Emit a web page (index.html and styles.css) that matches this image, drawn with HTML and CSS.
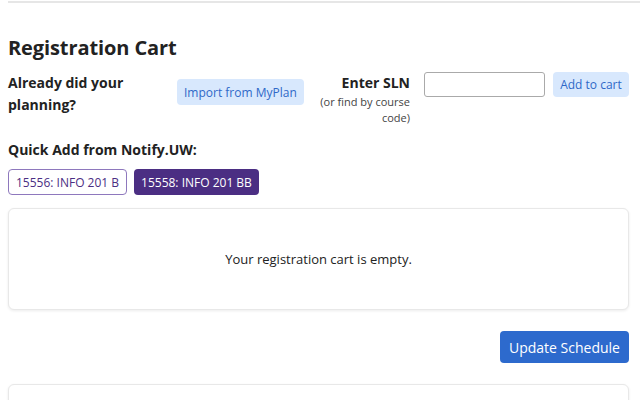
FILE: index.html
```html
<!DOCTYPE html>
<html>
<head>
<meta charset="utf-8">
<link rel="stylesheet" href="styles.css">
</head>
<body>
<div class="topline"></div>
<main class="page">
  <h1 class="title">Registration Cart</h1>
  <div class="addrow">
    <div class="label-plan">Already did your planning?</div>
    <button class="btn-light import">Import from MyPlan</button>
    <div class="sln-label">
      <div class="sln-title">Enter SLN</div>
      <div class="sln-sub">(or find by course code)</div>
    </div>
    <input class="sln-input" type="text">
    <button class="btn-light add">Add to cart</button>
  </div>
  <div class="quick-title">Quick Add from Notify.UW:</div>
  <div class="chips">
    <button class="chip chip-outline">15556: INFO 201 B</button>
    <button class="chip chip-filled">15558: INFO 201 BB</button>
  </div>
  <section class="card empty">Your registration cart is empty.</section>
  <div class="actions">
    <button class="btn-primary">Update Schedule</button>
  </div>
  <section class="card next"></section>
</main>
</body>
</html>
```
FILE: styles.css
```css
html, body { margin: 0; padding: 0; background: #fff; }
body { font-family: "Open Sans", "Noto Sans", sans-serif; color: #222; overflow: hidden; height: 400px; }
.topline { margin: 1px 0 0 8px; height: 2px; background: #e6e6e6; }
.page { padding: 0 11px 0 8px; }
.title { margin: 31px 0 0; font-size: 20px; font-weight: 700; line-height: 28px; color: #222; letter-spacing: -0.1px; }
.addrow { display: flex; align-items: flex-start; margin-top: 8px; }
.label-plan { width: 130px; font-size: 14px; font-weight: 700; line-height: 22px; margin-top: 2px; }
button { font-family: inherit; border: none; cursor: pointer; }
.btn-light { background: #d8e8fd; color: #2f68c8; font-size: 12px; border-radius: 4px; padding: 0 7px; height: 26px; }
.import { margin-left: 39px; margin-top: 9px; }
.sln-label { flex: 1; text-align: right; }
.sln-title { font-size: 14px; font-weight: 700; line-height: 22px; margin-top: 2px; }
.sln-sub { font-size: 11px; line-height: 16px; color: #444; margin-left: auto; width: 100px; }
.sln-input { margin-left: 14px; width: 121px; height: 25px; box-sizing: border-box; border: 1px solid #aaa; border-radius: 3px; margin-top: 2px; }
.add { margin-left: 8px; margin-top: 2px; height: 25px; width: 76px; padding: 0; }
.quick-title { font-size: 14px; font-weight: 700; line-height: 20px; margin-top: 14px; }
.chips { display: flex; gap: 7px; margin-top: 9px; }
.chip { font-size: 12px; height: 26px; border-radius: 4px; padding: 0 7px; }
.chip-outline { background: #fff; color: #4b2e83; border: 1px solid #8e78bd; }
.chip-filled { background: #4b2e83; color: #fff; }
.card { border: 1px solid #e8e8e8; border-radius: 6px; box-shadow: 0 1px 3px rgba(0,0,0,0.08); background: #fff; }
.empty { margin-top: 13px; height: 100px; display: flex; align-items: center; justify-content: center; font-size: 13px; color: #222; }
.actions { display: flex; justify-content: flex-end; margin-top: 21px; }
.btn-primary { background: #2d6acd; color: #fff; font-size: 14px; height: 32px; width: 129px; border-radius: 4px; padding: 0; }
.next { margin-top: 21px; height: 60px; }
```
